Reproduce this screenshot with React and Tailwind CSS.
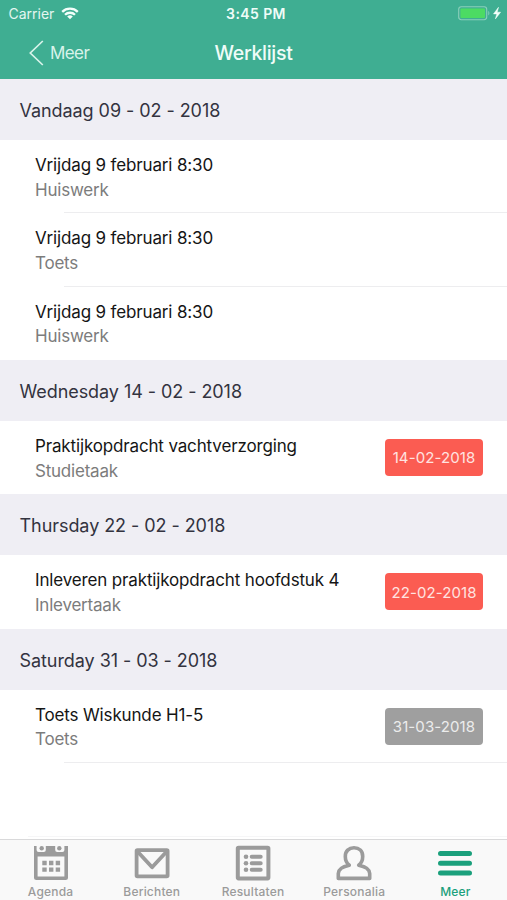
import React from "react";

const sections = [
  {
    title: "Vandaag 09 - 02 - 2018",
    items: [
      { title: "Vrijdag 9 februari 8:30", kind: "Huiswerk", divider: true },
      { title: "Vrijdag 9 februari 8:30", kind: "Toets", divider: true },
      { title: "Vrijdag 9 februari 8:30", kind: "Huiswerk" },
    ],
  },
  {
    title: "Wednesday 14 - 02 - 2018",
    items: [{ title: "Praktijkopdracht vachtverzorging", kind: "Studietaak", date: "14-02-2018", color: "bg-[#fb5c52] text-[#ffe3e0]" }],
  },
  {
    title: "Thursday 22 - 02 - 2018",
    items: [{ title: "Inleveren praktijkopdracht hoofdstuk 4", kind: "Inlevertaak", date: "22-02-2018", color: "bg-[#fb5c52] text-[#ffe3e0]" }],
  },
  {
    title: "Saturday 31 - 03 - 2018",
    items: [{ title: "Toets Wiskunde H1-5", kind: "Toets", date: "31-03-2018", color: "bg-[#9f9f9f] text-[#ececec]", divider: true }],
  },
];

function StatusBar() {
  return (
    <div className="grid h-[27px] grid-cols-3 items-center">
      <div className="flex items-center gap-[7px] pl-[8.5px]">
        <span className="text-[14px] text-[#e4f6f0]">Carrier</span>
        <svg width="18" height="13" viewBox="0 0 18 13" fill="none" stroke="#f4fffb" strokeWidth="2.3">
          <path d="M1.2 4.8a11.2 11.2 0 0 1 15.6 0" />
          <path d="M4 7.8a7.1 7.1 0 0 1 10 0" />
          <path d="M9 12.2 6.2 9.6a4 4 0 0 1 5.6 0Z" fill="#f4fffb" stroke="none" />
        </svg>
      </div>
      <div className="pl-[5px] text-center text-[14px] font-semibold tracking-[0.4px] text-[#effcf8]">3:45 PM</div>
      <div className="flex items-center justify-end pr-[5px]">
        <svg width="44" height="15" viewBox="0 0 44 15">
          <rect x="0.7" y="0.7" width="28" height="13" rx="2.6" fill="none" stroke="#8bd0bb" strokeWidth="1.1" />
          <rect x="2.4" y="2.4" width="24.6" height="9.6" rx="1" fill="#4cdb63" />
          <path d="M30.3 5v4.4c1.4-.5 1.4-3.9 0-4.4Z" fill="#8bd0bb" />
          <path d="m40.5 1.3-5 6.6h3.3l-1.4 5 5.2-6.7h-3.4Z" fill="#f4fffb" stroke="#f4fffb" strokeWidth="0.5" />
        </svg>
      </div>
    </div>
  );
}

function NavBar() {
  return (
    <div className="grid h-[52px] grid-cols-3 items-center">
      <div className="flex items-center gap-[6px] pl-[29px] text-[#d8f3ea]">
        <svg width="15" height="26" viewBox="0 0 15 26" fill="none" stroke="currentColor" strokeWidth="1.7" className="-mt-px">
          <path d="M13.8 1 1.3 13l12.5 12" />
        </svg>
        <span className="pt-[2px] text-[17px] tracking-[-0.6px]">Meer</span>
      </div>
      <h1 className="pt-px text-center text-[19.5px] font-medium tracking-[-0.3px] text-[#effcf8]">Werklijst</h1>
    </div>
  );
}

function Row({ item }) {
  return (
    <div className="relative flex h-[73.4px] items-center justify-between pr-6 pl-[35px]">
      <div className="pt-[2px] whitespace-nowrap">
        <div className="text-[17px] leading-[24.5px] tracking-[-0.15px] text-[#151515]">{item.title}</div>
        <div className="text-[17px] leading-[24.5px] tracking-[-0.22px] text-[#7c7c7c]">{item.kind}</div>
      </div>
      {item.date && (
        <div className={`flex h-[37px] w-[98px] items-center justify-center rounded-[4px] pt-[2px] text-[15px] tracking-[0.1px] ${item.color}`}>
          {item.date}
        </div>
      )}
      {item.divider && <div className="absolute right-0 bottom-0 left-16 h-px bg-[#ededef]" />}
    </div>
  );
}

function CalendarIcon() {
  return (
    <svg width="36" height="36" viewBox="0 0 36 36" fill="#9b9b9b">
      <path fillRule="evenodd" d="M1 1h2.6v4a2 2 0 0 0 2 2h5.2a2 2 0 0 0 2-2V1h9.4v4a2 2 0 0 0 2 2h5.2a2 2 0 0 0 2-2V1H35v31.500a2.500 2.500 0 0 1-2.500 2.500h-29A2.500 2.500 0 0 1 1 32.500ZM4.600 11.500v20h26.800v-20Z" />
      <circle cx="8.7" cy="3.2" r="2.2" />
      <circle cx="26.300" cy="3.200" r="2.200" />
      <path d="M9.300 15.800h4.400v4.400H9.300zM16 15.800h4.400v4.400H16zM22.700 15.800h4.400v4.400h-4.400zM9.300 22.400h4.400v4.400H9.300zM16 22.400h4.400v4.400H16zM22.700 22.400h4.400v4.400h-4.400z" />
    </svg>
  );
}

function MailIcon() {
  return (
    <svg width="36" height="36" viewBox="0 0 36 36" fill="none" stroke="#9b9b9b" strokeWidth="3.8" strokeLinejoin="round">
      <rect x="2.600" y="5.100" width="31" height="26.300" rx="0.800" />
      <path d="m3.500 6.500 14.600 15.800L32.700 6.500" />
    </svg>
  );
}

function ListIcon() {
  return (
    <svg width="36" height="36" viewBox="0 0 36 36" fill="none" stroke="#9b9b9b" strokeWidth="4">
      <rect x="2.800" y="2.800" width="30.600" height="30.600" rx="0.800" />
      <path d="M16.700 11.800h9M16.700 18.300h9M16.700 24.800h9" strokeLinecap="round" strokeWidth="4" />
      <g fill="#9b9b9b" stroke="none">
        <circle cx="11" cy="11.800" r="2.300" />
        <circle cx="11" cy="18.300" r="2.300" />
        <circle cx="11" cy="24.800" r="2.300" />
      </g>
    </svg>
  );
}

function PersonIcon() {
  return (
    <svg width="36" height="36" viewBox="0 0 36 36" fill="none" stroke="#9b9b9b" strokeWidth="3.6" strokeLinejoin="round">
      <path d="M13.300 20.200C10.600 18 9.300 15 9.300 11.400 9.300 6.200 12.800 2.800 18 2.800s8.700 3.400 8.700 8.600c0 3.600-1.300 6.600-4 8.800 6.300 1.300 11 3.600 11 8.300v4.900H2.300v-4.900c0-4.700 4.700-7 11-8.300Z" />
    </svg>
  );
}

function MenuIcon() {
  return (
    <svg width="36" height="36" viewBox="0 0 36 36" stroke="#1ba07c" strokeWidth="5" strokeLinecap="round">
      <path d="M3.500 8.600h29M3.500 18.300h29M3.500 28h29" />
    </svg>
  );
}

const tabs = [
  { label: "Agenda", Icon: CalendarIcon },
  { label: "Berichten", Icon: MailIcon },
  { label: "Resultaten", Icon: ListIcon },
  { label: "Personalia", Icon: PersonIcon },
  { label: "Meer", Icon: MenuIcon, active: true },
];

export default function App() {
  return (
    <div className="flex h-[900px] w-[507px] flex-col overflow-hidden bg-white font-['Inter','Liberation_Sans',sans-serif]">
      <header className="h-[79px] shrink-0 bg-[#3fae92]">
        <StatusBar />
        <NavBar />
      </header>
      <main className="flex-1">
        {sections.map((section) => (
          <section key={section.title}>
            <h2 className="flex h-[60.9px] items-center bg-[#efeef4] pt-[2px] pl-[19.5px] text-[18px] tracking-[-0.06px] text-[#33333f]">
              {section.title}
            </h2>
            {section.items.map((item, i) => (
              <Row key={i} item={item} />
            ))}
          </section>
        ))}
      </main>
      <div className="mb-[2px] ml-7 h-px shrink-0 bg-[#f6f6f7]" />
      <nav className="grid h-[61px] shrink-0 grid-cols-5 border-t border-[#d9d9da] bg-[#f9f9f9] pr-px">
        {tabs.map(({ label, Icon, active }) => (
          <div key={label} className="flex flex-col items-center pt-[5px]">
            <Icon />
            <span className={`mt-[3px] text-[12px] leading-[16px] font-medium tracking-[0.2px] ${active ? "text-[#1ba07c]" : "text-[#9b9b9b]"}`}>
              {label}
            </span>
          </div>
        ))}
      </nav>
    </div>
  );
}
